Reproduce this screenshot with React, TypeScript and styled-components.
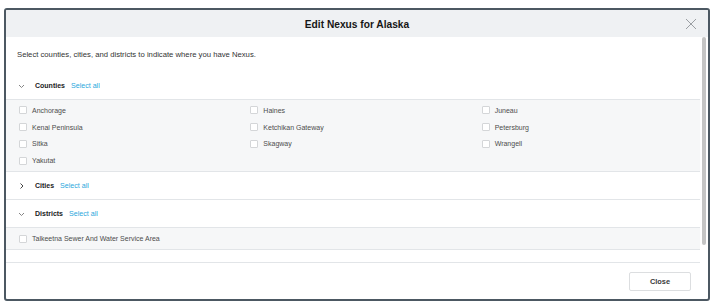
import React from "react";
import styled, { createGlobalStyle } from "styled-components";

const GlobalStyle = createGlobalStyle`
  html, body {
    margin: 0;
    padding: 0;
    background: #ffffff;
    font-family: "Liberation Sans", Arial, sans-serif;
    -webkit-font-smoothing: antialiased;
  }
`;

type Section = {
  title: string;
  open: boolean;
  items: string[];
};

const sections: Section[] = [
  {
    title: "Counties",
    open: true,
    items: [
      "Anchorage",
      "Haines",
      "Juneau",
      "Kenai Peninsula",
      "Ketchikan Gateway",
      "Petersburg",
      "Sitka",
      "Skagway",
      "Wrangell",
      "Yakutat",
    ],
  },
  { title: "Cities", open: false, items: [] },
  {
    title: "Districts",
    open: true,
    items: ["Talkeetna Sewer And Water Service Area"],
  },
];

const Page = styled.div`
  padding: 8px 4px 3px 4px;
`;

const Modal = styled.div`
  width: 706px;
  height: 293px;
  box-sizing: border-box;
  border: 2px solid #4c5862;
  border-radius: 3px;
  background: #ffffff;
  display: flex;
  flex-direction: column;
  overflow: hidden;
`;

const Header = styled.div`
  position: relative;
  height: 27px;
  flex: none;
  background: #eff1f3;
  display: flex;
  align-items: center;
  justify-content: center;
  padding-top: 1px;
  box-sizing: border-box;
`;

const Title = styled.h1`
  margin: 0;
  font-size: 10.2px;
  font-weight: 700;
  color: #161616;
`;

const CloseIcon = styled.button`
  position: absolute;
  right: 11px;
  top: 8px;
  width: 12px;
  height: 12px;
  padding: 0;
  border: none;
  background: transparent;
  display: flex;
`;

const Body = styled.div`
  position: relative;
  height: 226px;
  flex: none;
  display: flex;
`;

const Scroller = styled.div`
  flex: 1;
  margin-right: 8px;
  overflow: hidden;
  border-bottom: 1px solid #e2e5e8;
`;

const ScrollThumb = styled.div`
  position: absolute;
  top: 0;
  right: 2px;
  width: 4px;
  height: 208px;
  border-radius: 2px;
  background: #c4c4c4;
`;

const Intro = styled.p`
  margin: 0;
  height: 35px;
  padding-left: 11px;
  display: flex;
  align-items: center;
  font-size: 7.7px;
  color: #333333;
`;

const Group = styled.div`
  border-bottom: 1px solid #e2e5e8;
`;

const GroupHeader = styled.div<{ $open: boolean }>`
  height: 27px;
  display: flex;
  align-items: center;
  padding-left: 11px;
  border-bottom: ${p => (p.$open ? "1px solid #e2e5e8" : "none")};
`;

const Chevron = styled.svg`
  width: 10px;
  height: 10px;
  margin-right: 8px;
  flex: none;
`;

const GroupTitle = styled.span`
  font-size: 7px;
  font-weight: 700;
  color: #1b1b1b;
`;

const SelectAll = styled.a`
  margin-left: 6px;
  font-size: 7.1px;
  color: #2aa7dc;
  cursor: pointer;
`;

const ItemGrid = styled.div`
  background: #f6f7f8;
  padding: 2px 0;
  display: grid;
  grid-template-columns: repeat(3, 1fr);
`;

const Item = styled.label`
  height: 16.8px;
  display: flex;
  align-items: center;
  padding-left: 13px;
  font-size: 7px;
  color: #4d4d4d;
`;

const Box = styled.span`
  width: 6px;
  height: 6px;
  border: 1px solid #d4d6d8;
  border-radius: 1px;
  background: #ffffff;
  margin-right: 5px;
  flex: none;
`;

const Footer = styled.div`
  flex: 1;
  display: flex;
  align-items: center;
  justify-content: flex-end;
  padding-right: 17px;
`;

const Button = styled.button`
  width: 62px;
  height: 19px;
  border: 1px solid #dcdee0;
  border-radius: 2px;
  background: #ffffff;
  font-family: "Liberation Sans", Arial, sans-serif;
  font-size: 7.4px;
  font-weight: 700;
  color: #3a3a3a;
`;

const ChevronIcon = ({ open }: { open: boolean }) => (
  <Chevron viewBox="0 0 10 10">
    {open ? (
      <path d="M2 4 L4.5 6.5 L7 4" fill="none" stroke="#777" strokeWidth="0.9" />
    ) : (
      <path d="M3.5 2.5 L6 5 L3.5 7.5" fill="none" stroke="#444" strokeWidth="1" />
    )}
  </Chevron>
);

export default function App() {
  return (
    <>
      <GlobalStyle />
      <Page>
        <Modal>
          <Header>
            <Title>Edit Nexus for Alaska</Title>
            <CloseIcon aria-label="Close">
              <svg width="12" height="12" viewBox="0 0 12 12">
                <path
                  d="M1 1 L11 11 M11 1 L1 11"
                  stroke="#9a9ea2"
                  strokeWidth="1"
                  fill="none"
                />
              </svg>
            </CloseIcon>
          </Header>
          <Body>
            <Scroller>
              <Intro>
                Select counties, cities, and districts to indicate where you
                have Nexus.
              </Intro>
              {sections.map(s => (
                <Group key={s.title}>
                  <GroupHeader $open={s.open}>
                    <ChevronIcon open={s.open} />
                    <GroupTitle>{s.title}</GroupTitle>
                    <SelectAll>Select all</SelectAll>
                  </GroupHeader>
                  {s.open && (
                    <ItemGrid>
                      {s.items.map(item => (
                        <Item key={item}>
                          <Box />
                          {item}
                        </Item>
                      ))}
                    </ItemGrid>
                  )}
                </Group>
              ))}
            </Scroller>
            <ScrollThumb />
          </Body>
          <Footer>
            <Button>Close</Button>
          </Footer>
        </Modal>
      </Page>
    </>
  );
}
